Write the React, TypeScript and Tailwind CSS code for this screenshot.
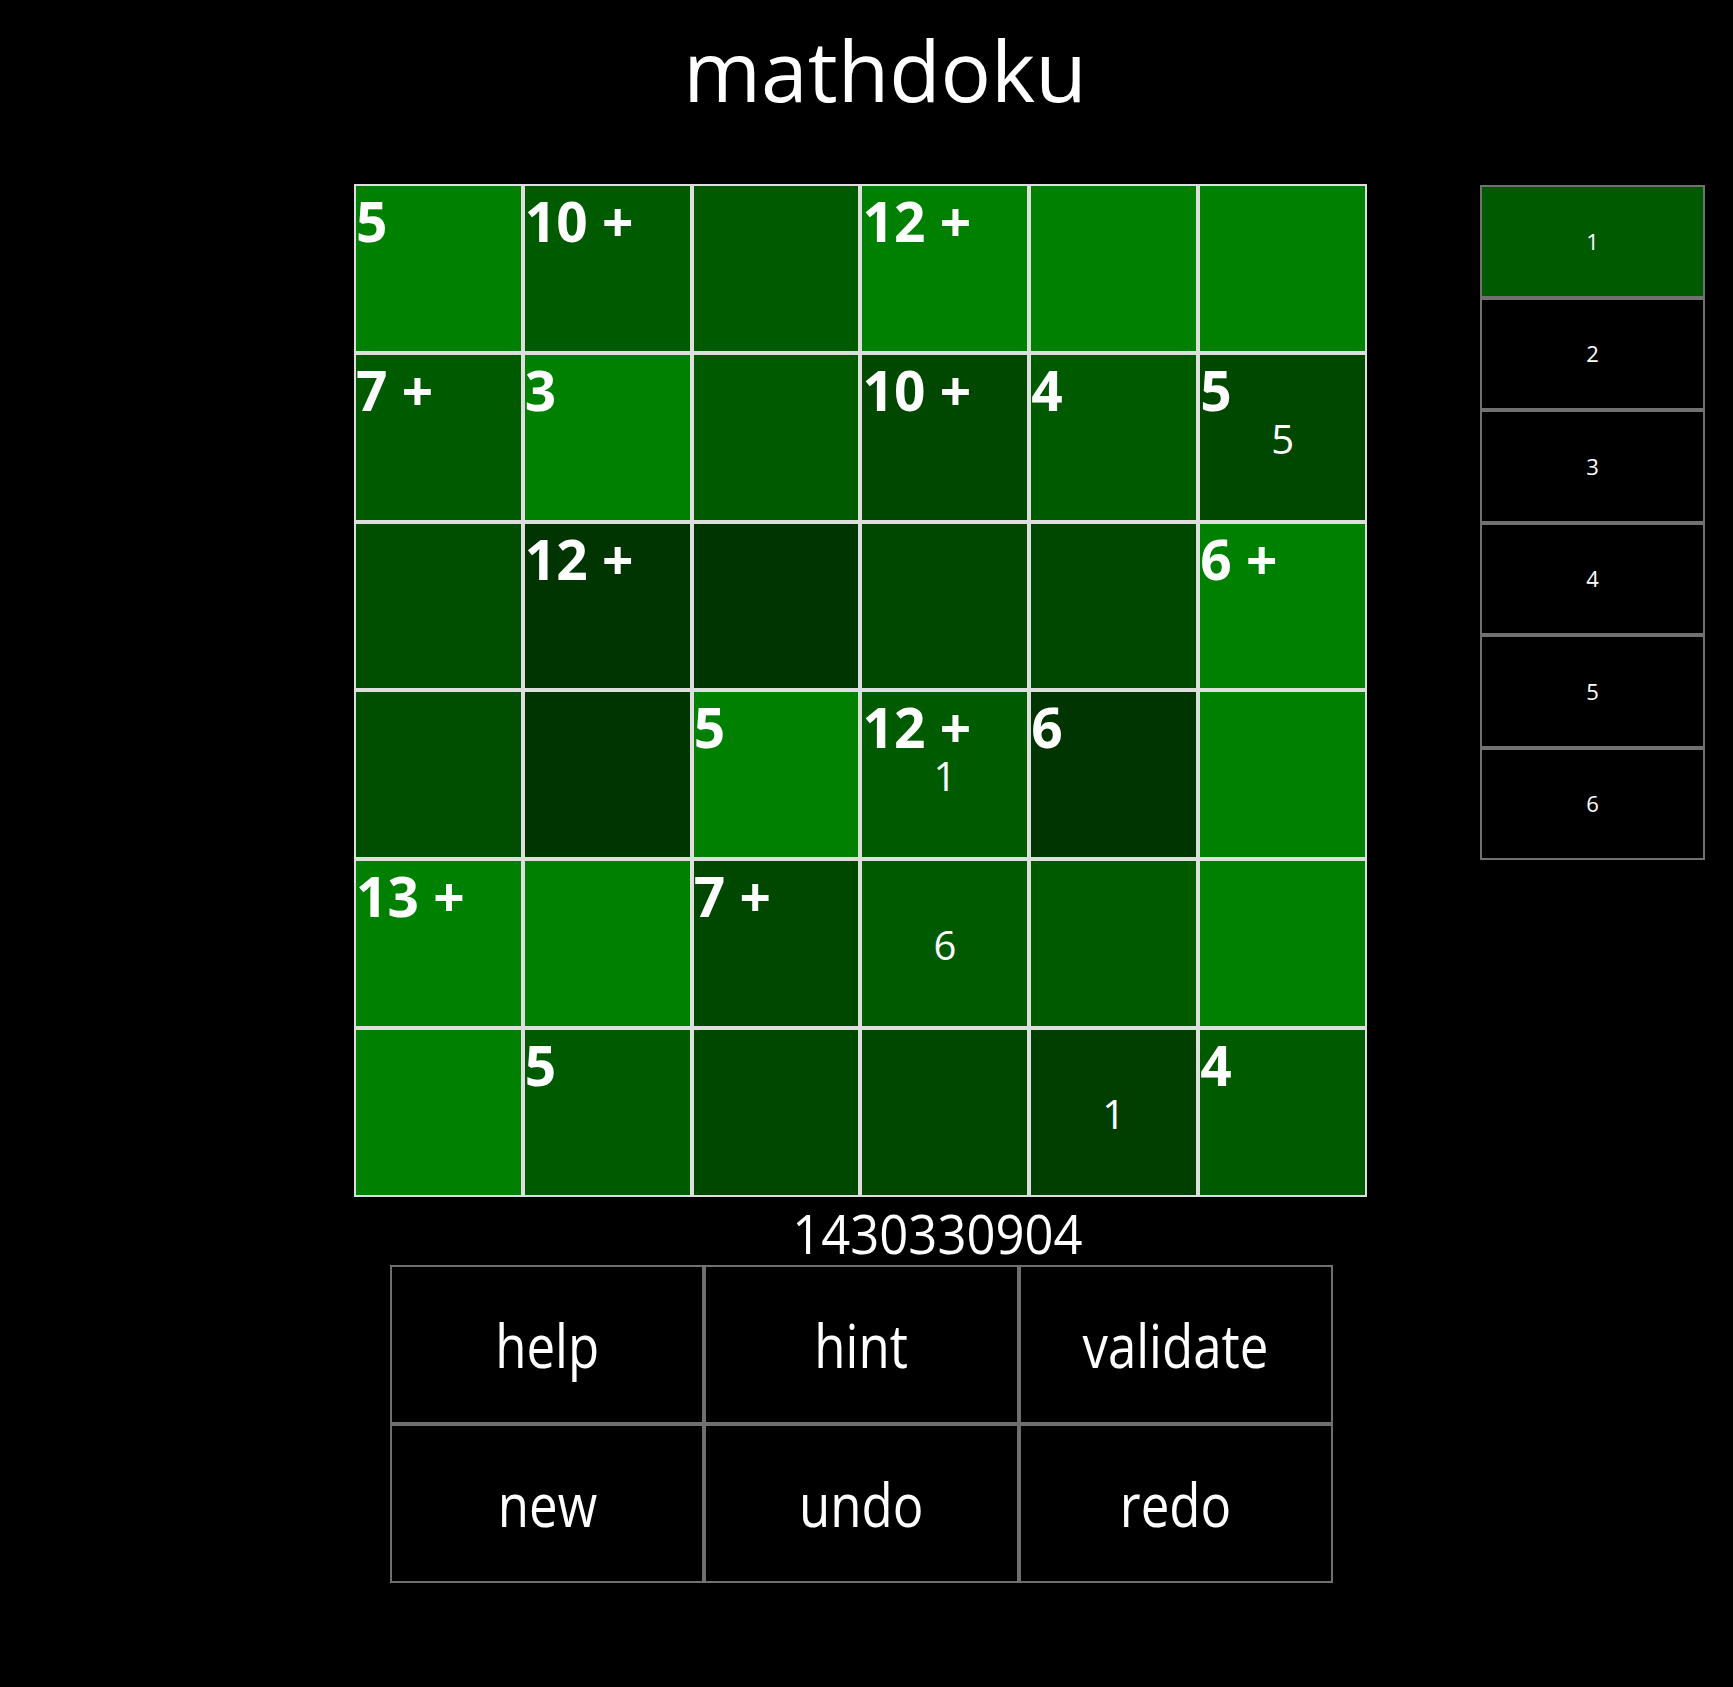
import React from "react";

const B = "bg-[#008000]";
const M = "bg-[#005a00]";
const D = "bg-[#004700]";
const F = "bg-[#004e00]";
const E = "bg-[#003f00]";
const X = "bg-[#003400]";

const colors: string[][] = [
  [B, M, M, B, B, B],
  [M, B, M, D, M, D],
  [F, X, X, D, D, B],
  [F, X, B, M, X, B],
  [B, B, D, M, M, B],
  [B, M, D, D, E, M],
];

const labels: Record<string, string> = {
  "0-0": "5",
  "0-1": "10 +",
  "0-3": "12 +",
  "1-0": "7 +",
  "1-1": "3",
  "1-3": "10 +",
  "1-4": "4",
  "1-5": "5",
  "2-1": "12 +",
  "2-5": "6 +",
  "3-2": "5",
  "3-3": "12 +",
  "3-4": "6",
  "4-0": "13 +",
  "4-2": "7 +",
  "5-1": "5",
  "5-5": "4",
};

const values: Record<string, string> = {
  "1-5": "5",
  "3-3": "1",
  "4-3": "6",
  "5-4": "1",
};

function Cell({ r, c }: { r: number; c: number }) {
  const key = `${r}-${c}`;
  const label = labels[key];
  const value = values[key];
  return (
    <div className={`grid grid-cols-1 grid-rows-1 border-2 border-[#dedede] ${colors[r][c]}`}>
      {label && (
        <span className="col-start-1 row-start-1 mt-[7px] self-start justify-self-start whitespace-nowrap text-[55px] font-bold leading-none text-white">
          {label}
        </span>
      )}
      {value && (
        <span className="col-start-1 row-start-1 mt-[3px] self-center justify-self-center text-[40px] font-normal leading-none text-white">
          {value}
        </span>
      )}
    </div>
  );
}

const buttons = ["help", "hint", "validate", "new", "undo", "redo"];

export default function App() {
  return (
    <div className="min-h-[1687px] w-full bg-black font-['Open_Sans',sans-serif] text-white">
      <div className="flex justify-center pl-[37px] pt-[13px]">
        <h1 className="text-[84px] font-normal leading-[114px]">mathdoku</h1>
      </div>

      <div className="mt-[57px] flex items-start pl-[354px]">
        <div className="flex w-[1013px] flex-col">
          <div className="grid h-[1013px] w-[1013px] grid-cols-6 grid-rows-6">
            {colors.map((row, r) => row.map((_, c) => <Cell key={`${r}-${c}`} r={r} c={c} />))}
          </div>

          <div className="mt-[5px] flex justify-center pl-[154px]">
            <span className="inline-block scale-x-94 text-[54px] font-normal leading-[63px]">1430330904</span>
          </div>

          <div className="ml-[36px] grid w-[943px] grid-cols-3">
            {buttons.map((b) => (
              <div
                key={b}
                className="flex h-[159px] items-center justify-center border-2 border-[#6f6f6f] bg-black"
              >
                <span className="inline-block scale-x-85 text-[60px] font-normal leading-[82px]">{b}</span>
              </div>
            ))}
          </div>
        </div>

        <div className="ml-[113px] mt-[1px] flex w-[225px] flex-col">
          {[1, 2, 3, 4, 5, 6].map((n) => (
            <div
              key={n}
              className={`flex h-[112.5px] items-center justify-center border-2 border-[#717171] text-[22px] ${
                n === 1 ? "bg-[#005a00]" : "bg-black"
              }`}
            >
              {n}
            </div>
          ))}
        </div>
      </div>
    </div>
  );
}
